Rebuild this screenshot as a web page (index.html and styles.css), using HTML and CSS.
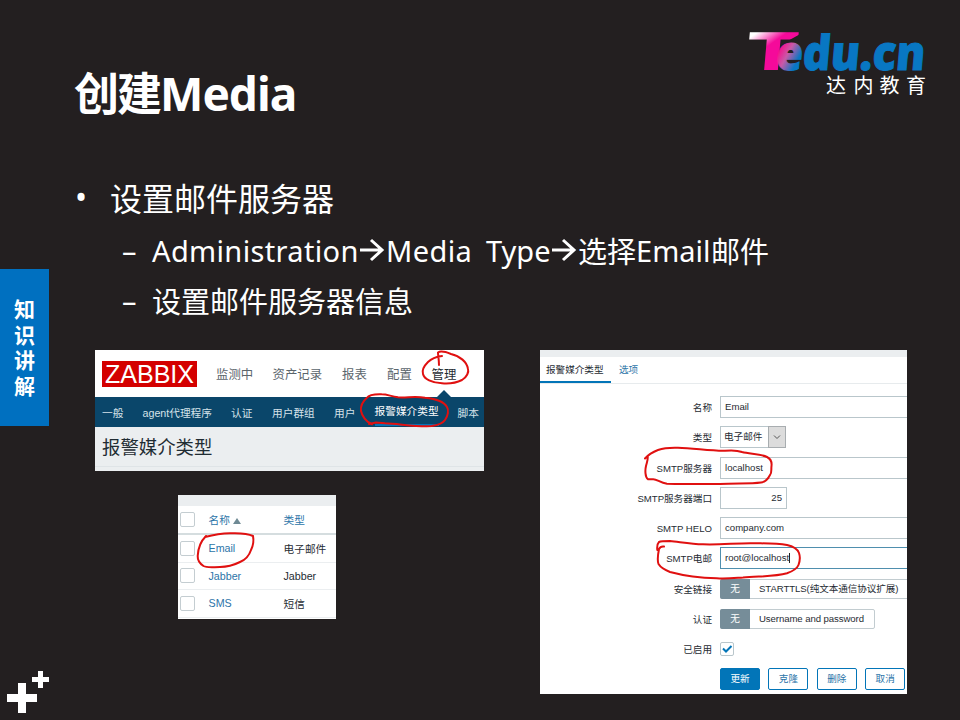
FILE: index.html
```html
<!DOCTYPE html>
<html lang="zh-CN">
<head>
<meta charset="utf-8">
<title>创建Media</title>
<link rel="stylesheet" href="styles.css">
</head>
<body>
<div class="slide">
  <aside class="rail">
    <div class="rail-tab"><span>知</span><span>识</span><span>讲</span><span>解</span></div>
    <svg class="plus" width="60" height="60" viewBox="0 0 60 60" fill="#fff">
      <path d="M18 23h8v30h-8z M7 34h30v8H7z M38 11h5v17h-5z M32 17h17v5H32z"/>
    </svg>
  </aside>
  <main class="main">
    <header class="head">
      <h1>创建<span>Media</span></h1>
      <svg class="logo" width="200" height="90" viewBox="740 10 200 90">
        <defs>
          <linearGradient id="gt" gradientUnits="userSpaceOnUse" x1="-10" y1="-38" x2="14" y2="-6">
            <stop offset="0.1" stop-color="#fff"/><stop offset="0.55" stop-color="#f50a9a"/>
          </linearGradient>
          <linearGradient id="ge" gradientUnits="userSpaceOnUse" x1="2" y1="-18" x2="24" y2="-8">
            <stop offset="0" stop-color="#f5128d"/><stop offset="0.4" stop-color="#c85aa8"/><stop offset="0.9" stop-color="#0877c3"/>
          </linearGradient>
          <clipPath id="taper"><path d="M-20 -40H46L22 -26V4H-20z"/></clipPath>
        </defs>
        <g transform="translate(758 70) skewX(-5)" clip-path="url(#taper)">
          <text class="logo-t" x="-14" y="0" textLength="54" lengthAdjust="spacingAndGlyphs" fill="url(#gt)">T</text>
        </g>
        <text class="logo-w" transform="translate(775 69.500) skewX(-5)" x="0" y="0" textLength="149" lengthAdjust="spacingAndGlyphs" fill="url(#ge)" stroke="url(#ge)">edu.cn</text>
        <text class="logo-c" x="826 853.500 879.500 906" y="92.500">达内教育</text>
      </svg>
    </header>
    <ul class="points">
      <li class="p1"><i>•</i>设置邮件服务器</li>
      <li class="p2"><i>–</i><span class="w1">Administration</span><svg class="arrow" width="28" height="24" viewBox="0 0 28 24"><path d="M2 12H24M13 2L24 12L13 22"/></svg><span class="w2">Media</span><span class="w3">Type</span><svg class="arrow" width="28" height="24" viewBox="0 0 28 24"><path d="M2 12H24M13 2L24 12L13 22"/></svg>选择<span class="w4">Email</span>邮件</li>
      <li class="p2"><i>–</i>设置邮件服务器信息</li>
    </ul>
    <div class="shots">
      <div class="left">
        <section class="menu">
          <nav class="top">
            <b class="zbx"><svg width="95" height="26"><text x="3" y="21.500" textLength="89" lengthAdjust="spacingAndGlyphs">ZABBIX</text></svg></b>
            <span>监测中</span><span>资产记录</span><span>报表</span><span>配置</span><span class="cur">管理</span>
          </nav>
          <nav class="sub">
            <span>一般</span><span>agent代理程序</span><span>认证</span><span>用户群组</span><span>用户</span><span class="cur">报警媒介类型</span><span>脚本</span>
          </nav>
          <h2>报警媒介类型</h2>
        </section>
        <section class="list">
          <div class="tr th"><i></i><span>名称 <svg width="8" height="6"><path d="M0 6L4 0L8 6z" fill="#6f8a94"/></svg></span><span>类型</span></div>
          <div class="tr"><i></i><span>Email</span><em>电子邮件</em></div>
          <div class="tr"><i></i><span>Jabber</span><em>Jabber</em></div>
          <div class="tr"><i></i><span>SMS</span><em>短信</em></div>
        </section>
      </div>
      <section class="form">
        <div class="tabs"><span class="on">报警媒介类型</span><span>选项</span></div>
        <div class="rows">
          <label>名称</label><div class="inp">Email</div>
          <label>类型</label><div class="sel"><span>电子邮件</span><svg width="16" height="20"><path d="M5 8.500L8 11.500L11 8.500" fill="none" stroke="#555"/></svg></div>
          <label>SMTP服务器</label><div class="inp">localhost</div>
          <label>SMTP服务器端口</label><div class="inp num">25</div>
          <label>SMTP HELO</label><div class="inp">company.com</div>
          <label>SMTP电邮</label><div class="inp focus">root@localhost<u></u></div>
          <label>安全链接</label><div class="seg wide"><b>无</b><span>STARTTLS(纯文本通信协议扩展)</span></div>
          <label>认证</label><div class="seg"><b>无</b><span>Username and password</span></div>
          <label>已启用</label><div class="chk"><svg width="12" height="12"><path d="M2 5.500L5 8.500L10.500 3" fill="none" stroke="#0275b8" stroke-width="2"/></svg></div>
          <label></label><div class="btns"><b>更新</b><span>克隆</span><span>删除</span><span>取消</span></div>
        </div>
      </section>
    </div>
  </main>
  <svg class="ink" width="960" height="720" viewBox="0 0 960 720">
    <path d="M442 356C434 357 430 360 428 362C424 366 422 371 423 374C424 379 432 383 442 383.300C450 384 458 382 462 380C467 377 469 372 468 369C467 362 460 356 451 354C446 352 440 351 438 352.500C438 355 439 360 439 365"/>
    <path d="M369 424L376 422.500L385 423.300C400 424 418 427 431.700 426C438 425 443 423 445 420C448 416 449 410 447 407C444 401 436 399 425 397.700C415 396 406 398 398 397.300C390 396 387 394.300 381.700 394.300C374 394 369 395 366.700 398C362 402 360.500 407 361 411C362 416 366 422 372 424.300"/>
    <path d="M205 537C213 535 222 533.500 230 533.300C238 533 247 533 253 536C254 541 253 546 251 550C249 556 245 560 240 562C234 565 227 567 220 567C213 567 207 568 203.500 566C199 563 197.500 560 197.700 556C198 549 201 541 206 536"/>
    <path d="M645 458.500C649 454 654 451.500 658 450C665 447.500 672 447.500 678 447.700C694 448 710 451 725 450.700C733 450 737 450 742 452C750 454 761 454 767 457C771 459 772 462 771.500 466C771 470 772 473 770 475C768 479 765 482 761 482.500C750 484 735 483 720 484C700 484 680 484 667 483.700C660 483 657 479 653 479.300H648C645 477 645 470 646 466C647 462 648 460 647.700 456.700"/>
    <path d="M664 546.500C661 546 660 547 659 549C658 554 657 560 658.500 564C661 568 665 570 670 572C685 576 700 578 716.700 578.300C726 579 735 578 743 577.500C758 576 774 577 787 573.300C793 571 797 569 798.500 565C800 561 800 556 799 553C797 548 792 546 787 545C776 543 765 543.500 753 543.300C737 543 720 545 703 544.300C691 544 680 542 670 541C666 541 661 541 659 542C657 544 657 547 657.300 550"/>
  </svg>
</div>
</body>
</html>
```
FILE: styles.css
```css
* { box-sizing: border-box; }
body { margin: 0; }
h1, h2, ul { margin: 0; padding: 0; }
i, em { font-style: normal; }
u { text-decoration: none; }
.slide {
  position: relative; width: 960px; height: 720px; overflow: hidden;
  display: flex; background: #231f20; color: #fff;
  font-family: "Noto Sans", "Noto Sans CJK SC", sans-serif;
}
.rail { width: 49px; flex: none; display: flex; flex-direction: column; padding-top: 269px; }
.rail-tab {
  height: 157px; background: #0070c0; display: flex; flex-direction: column; align-items: center;
  padding-top: 28px; font-size: 21px; font-weight: 700; line-height: 25.500px;
}
.plus { margin-top: 234px; flex: none; }
.main { flex: 1; min-width: 0; }
.head { height: 168px; display: flex; justify-content: space-between; padding: 10px 20px 0 25px; }
h1 { font-size: 45px; line-height: 60px; margin-top: 53px; white-space: nowrap; letter-spacing: -2px; }
h1 span { font-size: 46px; letter-spacing: -1px; }
.logo { overflow: visible; }
.logo-t { font: 800 52px Inter, sans-serif; }
.logo-w { font: 800 48px "Open Sans", sans-serif; stroke-width: 1px; }
.logo-c { font: 20px "Noto Sans CJK SC", sans-serif; fill: #fff; }
.points { list-style: none; height: 182px; padding-left: 26px; white-space: nowrap; }
.points li { display: flex; align-items: center; }
.p1 { height: 57px; font-size: 32px; }
.p1 i { width: 35px; }
.p2 { height: 50px; font-size: 29px; padding-left: 47px; }
.p2 i { width: 30px; }
.w1 { width: 206px; letter-spacing: .35px; }
.w2 { width: 100px; letter-spacing: .4px; }
.w3 { width: 64px; }
.w4 { width: 75px; }
.arrow { fill: none; stroke: #fff; stroke-width: 3; flex: none; }
.shots { display: flex; padding-left: 46px; font-family: "Liberation Sans", "Noto Sans CJK SC", sans-serif; }
.left { width: 445px; }
.menu { width: 389px; height: 121px; background: #ebeef0; white-space: nowrap; }
.top { height: 47px; background: #fff; display: grid; grid-template-columns: 114px 56.500px 69.500px 45px 44.500px 30px; padding-left: 7px; align-items: center; font-size: 12.400px; color: #5b656c; }
.zbx { width: 95px; height: 26px; background: #d40000; }
.zbx svg { display: block; }
.zbx text { font: 25px "Liberation Sans", sans-serif; fill: #fff; }
.top .cur { color: #1f2c33; position: relative; }
.top .cur::after { content: ""; position: absolute; left: 4px; top: 25px; border: 8px solid transparent; border-top: 0; border-bottom-color: #0a466a; }
.sub { height: 30px; background: #0a466a; display: grid; grid-template-columns: 40.500px 88.500px 41px 62px 40.500px 83px 30px; padding-left: 7px; align-items: center; font-size: 10.700px; color: #d5e2e9; }
.sub .cur { color: #fff; height: 28px; line-height: 27px; border-bottom: 2px solid #0275b8; width: 64px; }
h2 { height: 40px; line-height: 41px; padding-left: 7px; border-bottom: 1px solid #dfe4e7; color: #1f2c33; font-size: 18.400px; font-weight: 400; }
.list { width: 158px; height: 124px; margin: 24px 0 0 83px; background: #fff; border-top: 11px solid #ebeef0; color: #1f2c33; font-size: 10.700px; }
.tr { height: 27.500px; display: grid; grid-template-columns: 28.500px 75px 1fr; padding-left: 2px; align-items: center; border-bottom: 1px solid #ebeef0; }
.th { height: 29px; border-bottom: 2px solid #d5dddf; }
.tr i { width: 15px; height: 15px; border: 1px solid #c4cdd1; border-radius: 2px; }
.tr span { color: #2c74a8; white-space: nowrap; }
.form { width: 367px; height: 344px; background: #fff; border-top: 7px solid #ebeef0; color: #1f2c33; font-size: 9.600px; overflow: hidden; white-space: nowrap; }
.tabs { height: 27px; display: flex; border-bottom: 1px solid #e7ebed; }
.tabs span { line-height: 26px; padding: 0 8px; color: #2c74a8; }
.tabs .on { width: 71px; padding: 0 6px; color: #1f2c33; border-bottom: 2px solid #0275b8; }
.rows { padding-top: 8px; display: grid; grid-template-columns: 172px 187px; column-gap: 8px; grid-auto-rows: 30.250px; align-items: center; }
label { text-align: right; }
.inp { height: 22px; line-height: 20px; border: 1px solid #b9c6cb; border-right: 0; padding-left: 4px; }
.num { width: 67px; text-align: right; border-right: 1px solid #b9c6cb; padding-right: 4px; }
.focus { border-color: #4f8fae; }
.focus u { display: inline-block; width: 1px; height: 10px; background: #222; vertical-align: -2px; }
.sel { width: 66px; height: 22px; border: 1px solid #b9c6cb; display: flex; justify-content: space-between; line-height: 20px; padding-left: 3px; }
.sel svg { background: #dcdcdc; outline: 1px solid #a8adb0; }
.seg { height: 20px; width: 155px; border: 1px solid #c2ccd0; border-radius: 2px; display: flex; line-height: 18px; }
.seg b { width: 30px; margin: -1px 0 -1px -1px; line-height: 20px; text-align: center; background: #768d99; color: #fff; font-weight: 400; border-radius: 2px 0 0 2px; }
.seg span { padding-left: 9px; letter-spacing: -.08px; }
.wide { width: 190px; }
.chk { width: 14px; height: 14px; border: 1px solid #b9c6cb; border-radius: 2px; }
.chk svg { display: block; }
.btns { display: flex; line-height: 20px; text-align: center; }
.btns b, .btns span { flex: none; width: 40px; height: 22px; border: 1px solid #0275b8; border-radius: 2px; color: #2c74a8; font-weight: 400; margin-right: 8.400px; }
.btns b { background: #0275b8; color: #fff; }
.ink { position: absolute; inset: 0; pointer-events: none; fill: none; stroke: #e01010; stroke-width: 2; stroke-linecap: round; stroke-linejoin: round; }
```
